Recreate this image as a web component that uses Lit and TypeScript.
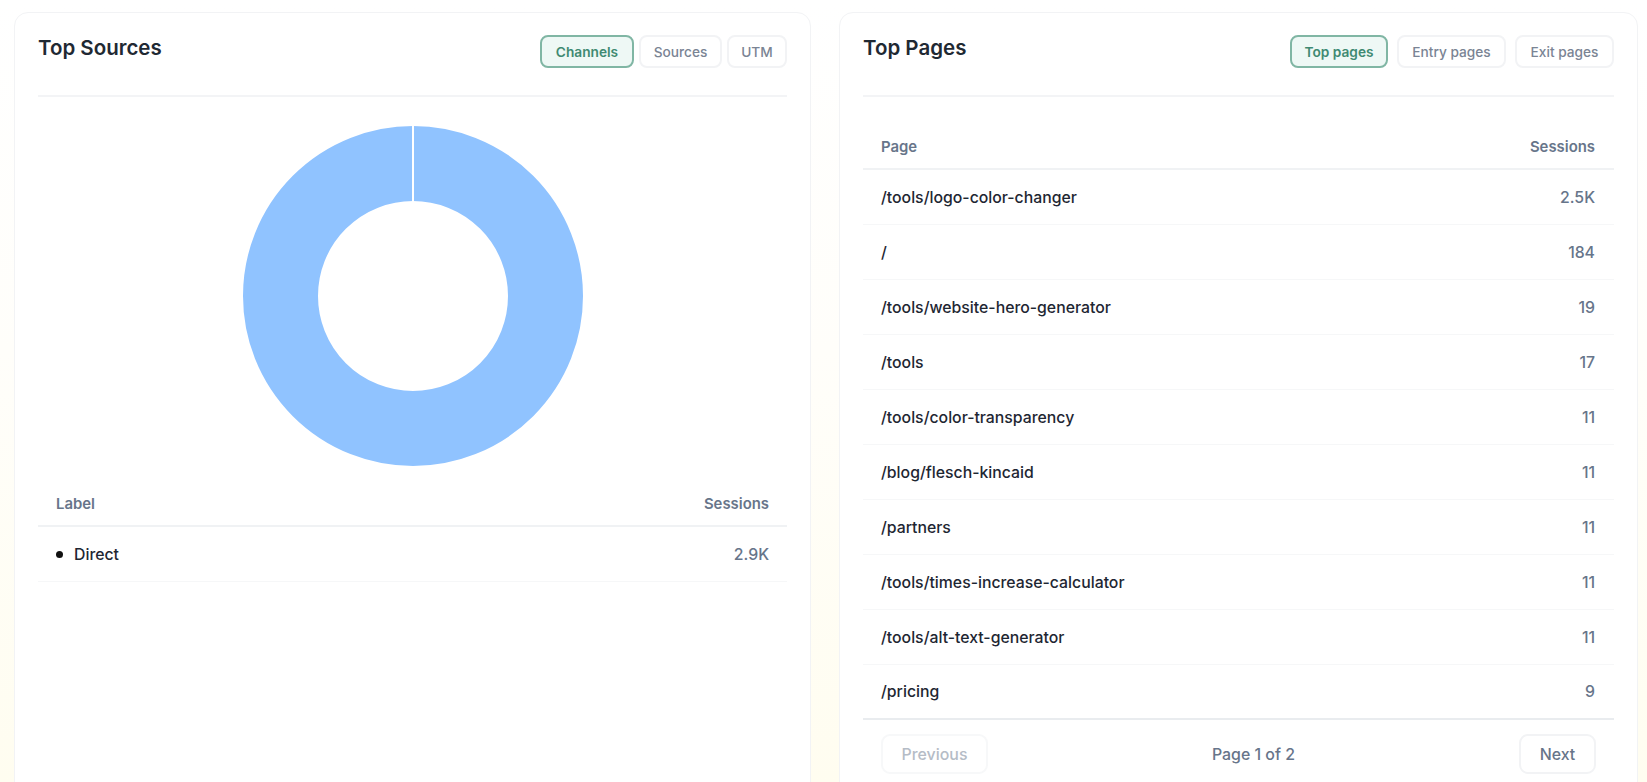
import { LitElement, html, css } from 'lit';
import { customElement } from 'lit/decorators.js';

const PAGES: [string, string][] = [
  ['/tools/logo-color-changer', '2.5K'],
  ['/', '184'],
  ['/tools/website-hero-generator', '19'],
  ['/tools', '17'],
  ['/tools/color-transparency', '11'],
  ['/blog/flesch-kincaid', '11'],
  ['/partners', '11'],
  ['/tools/times-increase-calculator', '11'],
  ['/tools/alt-text-generator', '11'],
  ['/pricing', '9'],
];

@customElement('app-root')
export class AppRoot extends LitElement {
  static styles = css`
    :host {
      display: block;
      height: 782px;
      overflow: hidden;
      font-family: Inter, 'Liberation Sans', sans-serif;
      background: linear-gradient(180deg, #ffffff 0%, #fffefa 45%, #fffdf0 100%);
    }

    .page {
      display: grid;
      grid-template-columns: 797px 799px;
      gap: 28px;
      padding: 12px 0 0 14px;
    }

    .card {
      height: 800px;
      box-sizing: border-box;
      padding: 22px 23px 0;
      background: #fff;
      border: 1px solid #f2f3f5;
      border-radius: 14px;
    }

    .head {
      display: flex;
      justify-content: space-between;
      box-sizing: border-box;
      height: 62px;
      border-bottom: 2px solid #f3f4f6;
    }

    h2 {
      margin: 0;
      font-size: 20.5px;
      line-height: 26px;
      font-weight: 600;
      color: #1f2933;
    }

    .tabs {
      display: flex;
      gap: 5px;
      height: 33px;
    }

    .tabs.wide {
      gap: 9px;
    }

    .tab {
      display: flex;
      align-items: center;
      justify-content: center;
      box-sizing: border-box;
      font-size: 13.7px;
      font-weight: 500;
      color: #7a8494;
      background: #fff;
      border: 2px solid #f2f3f5;
      border-radius: 8px;
    }

    .tab.on {
      font-weight: 600;
      color: #3f8a72;
      background: #eef8f5;
      border-color: #80b6a4;
    }

    .chart {
      display: flex;
      justify-content: center;
      padding-top: 29px;
    }

    .chart svg {
      display: block;
    }

    .row {
      display: flex;
      align-items: center;
      justify-content: space-between;
      box-sizing: border-box;
      height: 55px;
      padding: 0 18px;
      font-size: 15.8px;
      font-weight: 500;
      color: #1e2632;
      border-bottom: 1px solid #f6f7f8;
    }

    .row.top {
      height: 46px;
      padding-top: 2px;
      font-size: 14.9px;
      font-weight: 600;
      color: #67758a;
      border-bottom: 2px solid #f0f2f4;
    }

    .row.last {
      border-bottom: 2px solid #e9ecef;
    }

    .num {
      color: #67758a;
    }

    .sources-table {
      margin-top: 15px;
    }

    .pages-table {
      margin-top: 27px;
    }

    .pages-table .row {
      padding-right: 19px;
    }

    .label {
      display: flex;
      align-items: center;
      gap: 11px;
    }

    .dot {
      width: 7px;
      height: 7px;
      border-radius: 50%;
      background: #111;
    }

    .pager {
      display: flex;
      align-items: center;
      justify-content: space-between;
      padding: 14px 18px 0;
    }

    .pager span {
      font-size: 15.9px;
      font-weight: 500;
      color: #67758a;
    }

    .btn {
      display: flex;
      align-items: center;
      justify-content: center;
      box-sizing: border-box;
      height: 40px;
      font-size: 15.9px;
      font-weight: 500;
      color: #67758a;
      border: 2px solid #f2f3f5;
      border-radius: 9px;
    }

    .btn.off {
      color: #b5bcc6;
      border-color: #f7f8f9;
    }
  `;

  render() {
    return html`
      <div class="page">
        <section class="card">
          <div class="head">
            <h2>Top Sources</h2>
            <div class="tabs">
              <div class="tab on" style="width:94px">Channels</div>
              <div class="tab" style="width:83px">Sources</div>
              <div class="tab" style="width:60px">UTM</div>
            </div>
          </div>
          <div class="chart">
            <svg width="340" height="340" viewBox="0 0 340 340">
              <circle cx="170" cy="170" r="132.5" fill="none" stroke="#90c3ff" stroke-width="75"></circle>
              <line x1="170" y1="0" x2="170" y2="75" stroke="#fff" stroke-width="2"></line>
            </svg>
          </div>
          <div class="sources-table">
            <div class="row top"><div>Label</div><div>Sessions</div></div>
            <div class="row">
              <div class="label"><i class="dot"></i>Direct</div>
              <div class="num">2.9K</div>
            </div>
          </div>
        </section>
        <section class="card">
          <div class="head">
            <h2>Top Pages</h2>
            <div class="tabs wide">
              <div class="tab on" style="width:98px">Top pages</div>
              <div class="tab" style="width:109px">Entry pages</div>
              <div class="tab" style="width:99px">Exit pages</div>
            </div>
          </div>
          <div class="pages-table">
            <div class="row top"><div>Page</div><div>Sessions</div></div>
            ${PAGES.map(
              ([path, count], i) => html`
                <div class="row ${i === PAGES.length - 1 ? 'last' : ''}">
                  <div>${path}</div>
                  <div class="num">${count}</div>
                </div>
              `
            )}
          </div>
          <div class="pager">
            <div class="btn off" style="width:107px">Previous</div>
            <span>Page 1 of 2</span>
            <div class="btn" style="width:77px">Next</div>
          </div>
        </section>
      </div>
    `;
  }
}

declare global {
  interface HTMLElementTagNameMap {
    'app-root': AppRoot;
  }
}
